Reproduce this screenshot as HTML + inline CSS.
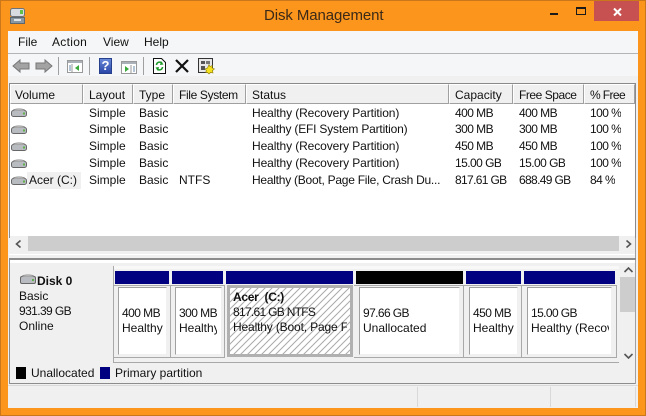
<!DOCTYPE html>
<html><head><meta charset="utf-8">
<style>
html,body{margin:0;padding:0;width:646px;height:416px;overflow:hidden;background:#fb951c;font-family:"Liberation Sans",sans-serif;font-size:12px;color:#111;}
div,span{position:absolute;white-space:nowrap;box-sizing:border-box;}
svg{position:absolute;overflow:visible}
.h{top:84px;height:20px;background:#f0f0f0;border:1px solid #a0a0a0;border-left-color:#fff;border-top-color:#fff;line-height:20px;padding-left:5px;}
.c{line-height:16px;height:16px;overflow:hidden}
.n{letter-spacing:-.55px}
.bar{top:271px;height:13px}
.box{top:287px;height:68px;background:#fff;border:1px solid #a0a0a0;border-right-color:#f0f0f0;border-bottom-color:#f0f0f0;overflow:hidden;line-height:15px}
.wrap{top:285px;height:73px;background:#f0f0f0;border:1px solid #a9a9a9;border-left:0;border-top-color:#a9a9a9}
.box span{left:3px;overflow:hidden}
</style></head><body>
<div style="left:0;top:0;width:646px;height:416px;border:1px solid #c9771a;"></div>

<svg style="left:9px;top:7px" width="18" height="18" viewBox="0 0 18 18"><rect x="1.5" y="1.5" width="14" height="8" rx="2" fill="#d8dce0" stroke="#6e7276"/><rect x="11" y="3" width="3" height="4" fill="#5fc04a"/><rect x="1.5" y="10.5" width="14" height="6" fill="#8a98a4" stroke="#5c666e"/><rect x="5" y="12" width="7" height="2" fill="#dfe4e8"/></svg>
<div style="left:264px;top:6px;font-size:15px;line-height:20px;color:#3c2a18;letter-spacing:-.1px">Disk Management</div>

<div style="left:550px;top:13px;width:8px;height:2px;background:#1a1a1a"></div>
<div style="left:576px;top:7px;width:10px;height:8px;border:1px solid #1a1a1a;border-top-width:2px"></div>
<div style="left:594px;top:1px;width:45px;height:20px;background:#c75050"></div>
<svg style="left:613px;top:8px" width="9" height="8"><path d="M1 .5L8 7.5M8 .5L1 7.5" stroke="#fff" stroke-width="2"/></svg>

<div style="left:8px;top:31px;width:630px;height:377px;background:#f0f0f0"></div>
<div style="left:8px;top:31px;width:630px;height:22px;background:#f5f6f7"></div>
<div style="left:8px;top:53px;width:630px;height:1px;background:#b4b4b4"></div>
<div style="left:8px;top:54px;width:630px;height:22px;background:#f5f6f7"></div>
<div style="left:18px;top:35px;line-height:15px">File</div>
<div style="left:52px;top:35px;line-height:15px;letter-spacing:.3px">Action</div>
<div style="left:103px;top:35px;line-height:15px">View</div>
<div style="left:144px;top:35px;line-height:15px">Help</div>

<svg style="left:12px;top:58px" width="18" height="16"><path d="M1 8L8 2V5H17V11H8V14Z" fill="#a3a3a3" stroke="#777"/></svg>
<svg style="left:35px;top:58px" width="18" height="16"><path d="M17 8L10 2V5H1V11H10V14Z" fill="#a3a3a3" stroke="#777"/></svg>
<div style="left:58px;top:57px;width:1px;height:18px;background:#a0a0a0"></div>
<svg style="left:67px;top:60px" width="17" height="14"><rect x=".5" y=".5" width="15" height="12" fill="#fff" stroke="#999"/><rect x="1" y="1" width="14" height="2" fill="#aab0b8"/><path d="M5 4V12" stroke="#999"/><path d="M2 6H4M2 8H4M2 10H4" stroke="#68a"/><path d="M12 5L8 8L12 11Z" fill="#3ba83b"/></svg>
<div style="left:89px;top:57px;width:1px;height:18px;background:#a0a0a0"></div>
<div style="left:99px;top:58px;width:13px;height:16px;background:linear-gradient(#6a88d8,#2a46a8);border:1px solid #26408c;color:#fff;font-weight:bold;font-size:13px;line-height:14px;text-align:center">?</div>
<svg style="left:121px;top:61px" width="17" height="14"><rect x=".5" y=".5" width="15" height="12" fill="#fff" stroke="#999"/><rect x="1" y="1" width="14" height="2" fill="#aab0b8"/><path d="M10 4V12" stroke="#999"/><path d="M12 6H14M12 8H14M12 10H14" stroke="#68a"/><path d="M4 5L8 8L4 11Z" fill="#3ba83b"/></svg>
<div style="left:143px;top:57px;width:1px;height:18px;background:#a0a0a0"></div>
<svg style="left:153px;top:58px" width="13" height="16"><path d="M.5.5H8.5L12.5 4.5V15.5H.5Z" fill="#fff" stroke="#111"/><path d="M3.5 7A3 3 0 0 1 9 5.5M9.5 9A3 3 0 0 1 4 10.5" fill="none" stroke="#1d9a2a" stroke-width="1.6"/><path d="M8 3L10.5 6.5L7 7Z M5 13L2.5 9.5L6 9Z" fill="#1d9a2a"/></svg>
<svg style="left:175px;top:59px" width="14" height="14"><path d="M1 1L13 13M13 1L1 13" stroke="#111" stroke-width="2.2"/></svg>
<svg style="left:198px;top:58px" width="17" height="17"><rect x=".5" y=".5" width="14" height="14" fill="#e8e8e8" stroke="#333"/><rect x="3" y="3" width="4" height="3" fill="#555"/><rect x="8" y="3" width="4" height="3" fill="#777"/><rect x="3" y="8" width="4" height="4" fill="#555"/><path d="M11 6.5L12 8.5L14.5 7.5L14 10L16.5 11L14.5 12.5L15 15L12.5 14.5L11 16L9.5 14.5L7.5 14.5L8.5 12.5L7 11L9.5 10Z" fill="#f6e21c" stroke="#8a7a10" stroke-width=".6"/></svg>

<div style="left:9px;top:83px;width:627px;height:155px;background:#fff;border:1px solid #8a8a8a;border-bottom:0"></div>

<div class="h" style="left:10px;width:73px;padding-left:4px">Volume</div>
<div class="h" style="left:83px;width:50px">Layout</div>
<div class="h" style="left:133px;width:40px">Type</div>
<div class="h" style="left:173px;width:73px;letter-spacing:-.35px">File System</div>
<div class="h" style="left:246px;width:203px">Status</div>
<div class="h" style="left:449px;width:64px">Capacity</div>
<div class="h" style="left:513px;width:71px;letter-spacing:-.45px">Free Space</div>
<div class="h" style="left:584px;width:51px;letter-spacing:-.6px">% Free</div>

<svg style="left:11px;top:108px" width="17" height="80"><defs><g id="d"><rect x=".5" y="2.5" width="15" height="6" rx="2" fill="#b8bcc0" stroke="#666"/><path d="M2 2.5C3 .5 13 .5 14 2.5" fill="#e8e8e8" stroke="#888"/><rect x="12" y="4.5" width="2" height="2" fill="#5fb04a"/></g></defs><use href="#d" y="0"/><use href="#d" y="17"/><use href="#d" y="34"/><use href="#d" y="51"/><use href="#d" y="68"/></svg>
<div style="left:27px;top:172px;width:54px;height:17px;background:#f0f0f0"></div>

<div class="c" style="left:89px;top:105px">Simple</div><div class="c" style="left:139px;top:105px">Basic</div><div class="c" style="left:252px;top:105px;letter-spacing:-.1px">Healthy (Recovery Partition)</div><div class="c n" style="left:455px;top:105px">400 MB</div><div class="c n" style="left:519px;top:105px">400 MB</div><div class="c n" style="left:590px;top:105px">100 %</div>
<div class="c" style="left:89px;top:121px">Simple</div><div class="c" style="left:139px;top:121px">Basic</div><div class="c" style="left:252px;top:121px;letter-spacing:-.2px">Healthy (EFI System Partition)</div><div class="c n" style="left:455px;top:121px">300 MB</div><div class="c n" style="left:519px;top:121px">300 MB</div><div class="c n" style="left:590px;top:121px">100 %</div>
<div class="c" style="left:89px;top:138px">Simple</div><div class="c" style="left:139px;top:138px">Basic</div><div class="c" style="left:252px;top:138px;letter-spacing:-.1px">Healthy (Recovery Partition)</div><div class="c n" style="left:455px;top:138px">450 MB</div><div class="c n" style="left:519px;top:138px">450 MB</div><div class="c n" style="left:590px;top:138px">100 %</div>
<div class="c" style="left:89px;top:155px">Simple</div><div class="c" style="left:139px;top:155px">Basic</div><div class="c" style="left:252px;top:155px;letter-spacing:-.1px">Healthy (Recovery Partition)</div><div class="c n" style="left:455px;top:155px">15.00 GB</div><div class="c n" style="left:519px;top:155px">15.00 GB</div><div class="c n" style="left:590px;top:155px">100 %</div>
<div class="c" style="left:29px;top:172px">Acer (C:)</div><div class="c" style="left:89px;top:172px">Simple</div><div class="c" style="left:139px;top:172px">Basic</div><div class="c" style="left:179px;top:172px">NTFS</div><div class="c" style="left:252px;top:172px;letter-spacing:-.25px">Healthy (Boot, Page File, Crash Du...</div><div class="c n" style="left:455px;top:172px;letter-spacing:-.65px">817.61 GB</div><div class="c n" style="left:519px;top:172px;letter-spacing:-.65px">688.49 GB</div><div class="c n" style="left:590px;top:172px">84 %</div>

<div style="left:10px;top:236px;width:625px;height:18px;background:#f0f0f0"></div>
<div style="left:28px;top:236px;width:591px;height:15px;background:#cdcdcd"></div>
<svg style="left:15px;top:240px" width="7" height="8"><path d="M5.5 .5L1.5 4L5.5 7.5" fill="none" stroke="#555" stroke-width="1.6"/></svg>
<svg style="left:625px;top:240px" width="7" height="8"><path d="M1.5 .5L5.5 4L1.5 7.5" fill="none" stroke="#555" stroke-width="1.6"/></svg>
<div style="left:9px;top:254px;width:627px;height:1px;background:#fff"></div>
<div style="left:9px;top:258px;width:627px;height:2px;background:#8c8c8c"></div>
<div style="left:635px;top:238px;width:1px;height:20px;background:#a0a0a0"></div>

<div style="left:10px;top:260px;width:625px;height:3px;background:#fff"></div>
<svg style="left:20px;top:274px" width="17" height="11"><rect x=".5" y="2.5" width="15" height="7" rx="1.5" fill="#b8bcc0" stroke="#666"/><path d="M2 2.5C3 .5 13 .5 14 2.5" fill="#e8e8e8" stroke="#888"/><rect x="12" y="5" width="2" height="2" fill="#5fb04a"/></svg>
<div style="left:37px;top:273px;line-height:16px;font-weight:bold">Disk 0</div>
<div style="left:19px;top:289px;line-height:15px">Basic</div>
<div style="left:19px;top:304px;line-height:15px;letter-spacing:-.6px">931.39 GB</div>
<div style="left:19px;top:319px;line-height:15px">Online</div>
<div style="left:113px;top:266px;width:1px;height:97px;background:#a9a9a9"></div>
<div style="left:114px;top:266px;width:505px;height:3px;background:#f8f8f8"></div>
<div style="left:113px;top:362px;width:507px;height:1px;background:#a9a9a9"></div>
<div style="left:619px;top:263px;width:16px;height:100px;background:#f0f0f0"></div>
<div style="left:620px;top:277px;width:15px;height:35px;background:#cdcdcd"></div>
<svg style="left:624px;top:267px" width="9" height="6"><path d="M.5 5L4.5 1L8.5 5" fill="none" stroke="#555" stroke-width="1.6"/></svg>
<svg style="left:624px;top:353px" width="9" height="6"><path d="M.5 1L4.5 5L8.5 1" fill="none" stroke="#555" stroke-width="1.6"/></svg>

<div class="bar" style="left:115px;width:54px;background:#000080"></div>
<div class="bar" style="left:172px;width:51px;background:#000080"></div>
<div class="bar" style="left:226px;width:127px;background:#000080"></div>
<div class="bar" style="left:356px;width:107px;background:#000"></div>
<div class="bar" style="left:466px;width:55px;background:#000080"></div>
<div class="bar" style="left:524px;width:91px;background:#000080"></div>

<div class="wrap" style="left:114px;width:57px"></div>
<div class="wrap" style="left:171px;width:54px"></div>
<div class="wrap" style="left:354px;width:110px"></div>
<div class="wrap" style="left:464px;width:58px"></div>
<div class="wrap" style="left:522px;width:95px"></div>

<div class="box" style="left:118px;width:49px"><span class="n" style="top:18px">400 MB</span><span style="top:33px">Healthy</span></div>
<div class="box" style="left:175px;width:47px"><span class="n" style="top:18px">300 MB</span><span style="top:33px;width:38px">Healthy</span></div>
<div style="left:227px;top:285px;width:126px;height:72px;background:#b0b0b0"></div>
<svg style="left:230px;top:288px" width="120" height="66"><defs><pattern id="p" width="7" height="7" patternUnits="userSpaceOnUse" patternTransform="translate(0 0)"><rect width="7" height="7" fill="#fff"/><path d="M-1 8L8 -1M-1 1L1 -1M6 8L8 6" stroke="#aaa" stroke-width="1"/></pattern></defs><rect width="120" height="66" fill="url(#p)"/></svg>
<div style="left:230px;top:288px;width:120px;height:66px;overflow:hidden;line-height:15px">
<span style="left:3px;top:2px;font-weight:bold;letter-spacing:-.3px">Acer &nbsp;(C:)</span><span style="left:3px;top:17px;letter-spacing:-.7px">817.61 GB NTFS</span><span style="left:3px;top:32px;width:114px;overflow:hidden;letter-spacing:-.15px">Healthy (Boot, Page File</span></div>
<div class="box" style="left:359px;width:101px"><span class="n" style="top:18px;letter-spacing:-.6px">97.66 GB</span><span style="top:33px">Unallocated</span></div>
<div class="box" style="left:469px;width:49px"><span class="n" style="top:18px">450 MB</span><span style="top:33px">Healthy</span></div>
<div class="box" style="left:527px;width:85px"><span class="n" style="top:18px;letter-spacing:-.6px">15.00 GB</span><span style="top:33px;width:78px">Healthy (Recovery</span></div>

<div style="left:9px;top:363px;width:627px;height:21px;background:#f0f0f0;border-bottom:1px solid #8c8c8c"></div>
<div style="left:9px;top:260px;width:1px;height:124px;background:#8c8c8c"></div>
<div style="left:635px;top:260px;width:1px;height:124px;background:#a0a0a0"></div>
<div style="left:16px;top:367px;width:10px;height:12px;background:#000"></div>
<div style="left:31px;top:365px;line-height:16px">Unallocated</div>
<div style="left:100px;top:367px;width:10px;height:12px;background:#000080"></div>
<div style="left:115px;top:365px;line-height:16px">Primary partition</div>
<div style="left:8px;top:385px;width:630px;height:1px;background:#d8d8d8"></div>
<div style="left:417px;top:387px;width:1px;height:20px;background:#d8d8d8"></div>
<div style="left:550px;top:387px;width:1px;height:20px;background:#d8d8d8"></div>
<div style="left:635px;top:387px;width:1px;height:20px;background:#d8d8d8"></div>
</body></html>
